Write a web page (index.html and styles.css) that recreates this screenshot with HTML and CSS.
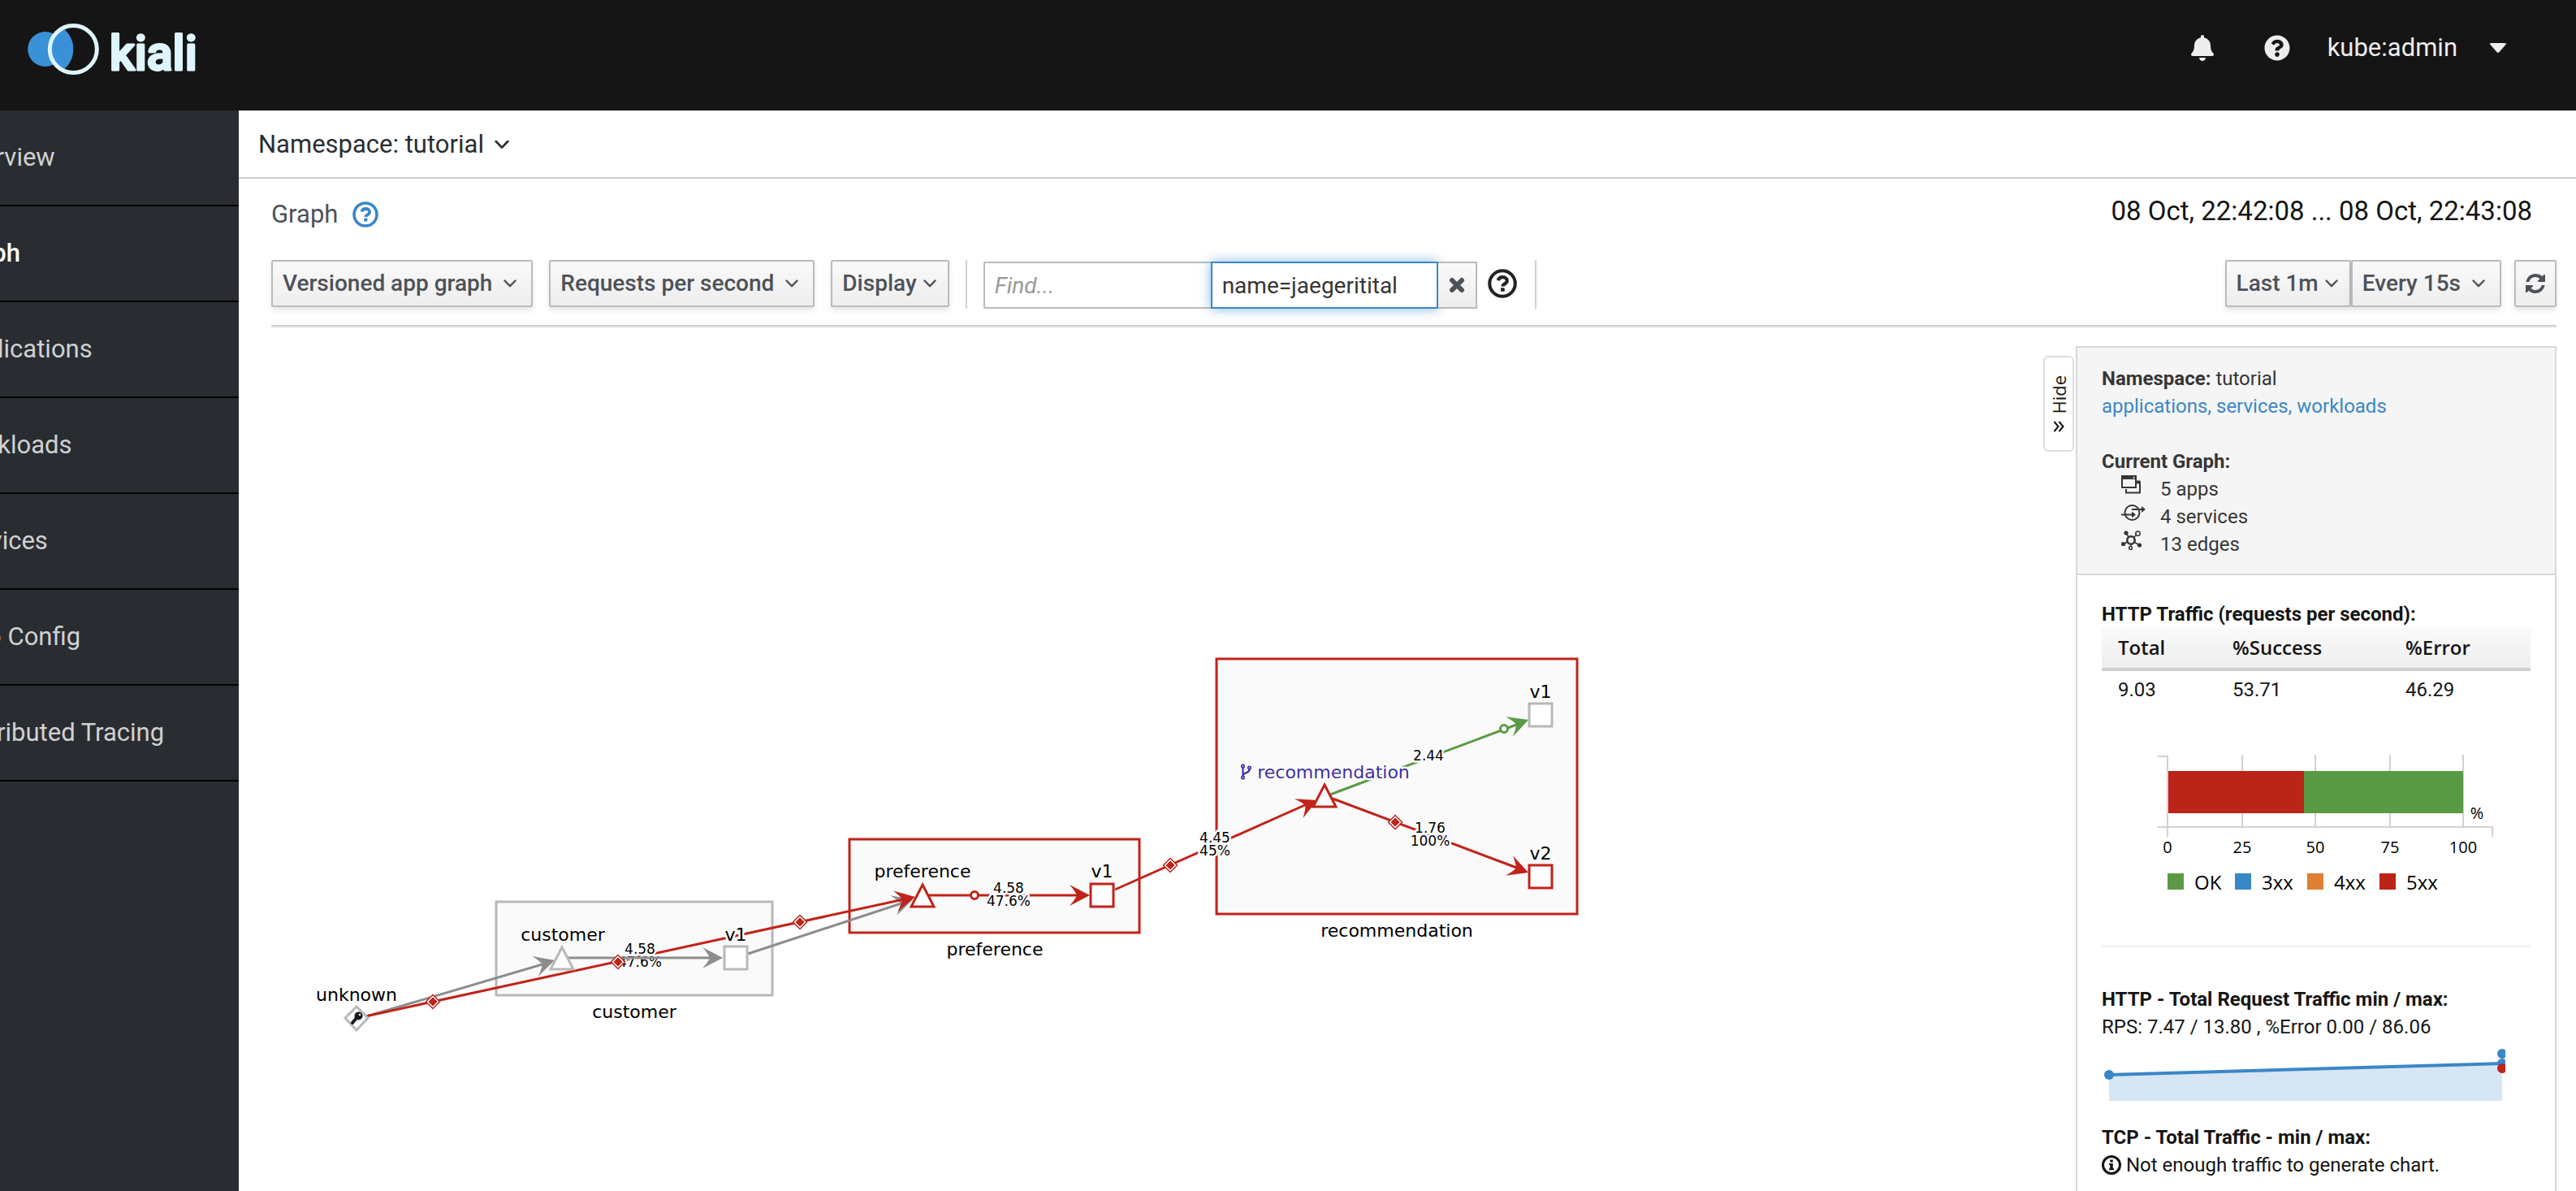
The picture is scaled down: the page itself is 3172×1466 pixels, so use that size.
FILE: index.html
```html
<!DOCTYPE html>
<html lang="en">
<head>
<meta charset="utf-8">
<meta name="viewport" content="width=device-width, initial-scale=1">
<title>Kiali - Graph</title>
<link rel="stylesheet" href="styles.css">
</head>
<body>
<svg class="defs" aria-hidden="true">
  <symbol id="chevron" viewBox="0 0 16 10"><path d="M1.5 1.5 8 8.200 14.500 1.500" fill="none" stroke="currentColor" stroke-width="2.400" stroke-linecap="round" stroke-linejoin="round"/></symbol>
  <symbol id="help-outline" viewBox="0 0 32 32">
    <circle cx="16" cy="16" r="14" fill="none" stroke="currentColor" stroke-width="3.600"/>
    <path d="M11.400 12.600C12 10.300 13.700 9 16.200 9c2.800 0 4.900 1.600 4.900 3.900 0 3.500-4.700 3.300-4.700 6.100" fill="none" stroke="currentColor" stroke-width="3.800"/>
    <rect x="14.200" y="20.600" width="4.200" height="4" rx="0.500" fill="currentColor"/>
  </symbol>
</svg>
<div class="app">
  <header class="masthead">
    <a class="brand" href="#" aria-label="Kiali home">
      <svg class="brand__logo" viewBox="34 26 220 66" aria-hidden="true">
        <clipPath id="ring-clip"><circle cx="90.300" cy="60.500" r="30"/></clipPath>
        <circle cx="55.700" cy="60.500" r="21.500" fill="#3b91d8"/>
        <circle cx="90.300" cy="60.500" r="30" fill="#151515"/>
        <circle cx="58" cy="60.500" r="32.400" fill="#3b91d8" clip-path="url(#ring-clip)"/>
        <circle cx="90.300" cy="60.500" r="29" fill="none" stroke="#def5fd" stroke-width="5"/>
        <text class="brand__name" x="135" y="86">kiali</text>
      </svg>
    </a>
    <div class="masthead__tools">
      <button class="icon-button" type="button" aria-label="Notifications">
        <svg width="28" height="32" viewBox="0 0 448 512"><path fill="currentColor" d="M224 512c35.320 0 63.970-28.650 63.970-64H160.030c0 35.350 28.650 64 63.970 64zm215.390-149.710c-19.320-20.760-55.470-51.990-55.470-154.290 0-77.700-54.480-139.900-127.940-155.160V32c0-17.670-14.320-32-31.980-32s-31.980 14.330-31.980 32v20.840C118.560 68.100 64.080 130.300 64.080 208c0 102.300-36.150 133.530-55.470 154.290-6 6.450-8.660 14.160-8.610 21.710.110 16.400 12.980 32 32.100 32h383.800c19.120 0 32-15.600 32.100-32 .050-7.550-2.610-15.270-8.610-21.710z"/></svg>
      </button>
      <button class="icon-button" type="button" aria-label="Help">
        <svg width="32" height="32" viewBox="0 0 512 512"><path fill="currentColor" d="M504 256c0 136.997-111.043 248-248 248S8 392.997 8 256C8 119.083 119.043 8 256 8s248 111.083 248 248zM262.655 90c-54.497 0-89.255 22.957-116.549 63.758-3.536 5.286-2.353 12.415 2.715 16.258l34.699 26.310c5.205 3.947 12.621 3.008 16.665-2.122 17.864-22.658 30.113-35.797 57.303-35.797 20.429 0 45.698 13.148 45.698 32.958 0 14.976-12.363 22.667-32.534 33.976C247.128 238.528 216 254.941 216 296v4c0 6.627 5.373 12 12 12h56c6.627 0 12-5.373 12-12v-1.333c0-28.462 83.186-29.647 83.186-106.667 0-58.002-60.165-102-116.531-102zM256 338c-25.365 0-46 20.635-46 46 0 25.364 20.635 46 46 46s46-20.636 46-46c0-25.365-20.635-46-46-46z"/></svg>
      </button>
      <button class="user-button" type="button">kube:admin
        <svg width="20" height="12" viewBox="0 0 20 12" aria-hidden="true"><path d="M1.500 0h17c1.200 0 1.800 1 1 2l-8.200 9.200c-.8.900-1.800.9-2.600 0L.5 2C-.3 1 .3 0 1.500 0z" fill="currentColor"/></svg>
      </button>
    </div>
  </header>

  <div class="body">
    <nav class="sidebar" aria-label="Main">
      <ul class="sidebar__list">
        <li><a href="#">Overview</a></li>
        <li><a class="is-current" href="#" aria-current="page">Graph</a></li>
        <li><a href="#">Applications</a></li>
        <li><a href="#">Workloads</a></li>
        <li><a href="#">Services</a></li>
        <li><a href="#">Istio Config</a></li>
        <li><a href="#">Distributed Tracing</a></li>
      </ul>
    </nav>

    <main class="main">
      <div class="namespace-bar">
        <button class="namespace-button" type="button">Namespace: tutorial <svg width="18" height="12"><use href="#chevron"/></svg></button>
      </div>

      <div class="page">
        <div class="title-row">
          <h1 class="title">Graph</h1>
          <button class="title__help" type="button" aria-label="Graph help"><svg width="32" height="32"><use href="#help-outline"/></svg></button>
          <time class="time-range">08 Oct, 22:42:08 ... 08 Oct, 22:43:08</time>
        </div>

        <div class="toolbar">
          <button class="btn" type="button">Versioned app graph <svg width="16" height="10"><use href="#chevron"/></svg></button>
          <button class="btn" type="button">Requests per second <svg width="16" height="10"><use href="#chevron"/></svg></button>
          <button class="btn btn--compact" type="button">Display <svg width="16" height="10"><use href="#chevron"/></svg></button>
          <form class="find">
            <input class="find__input" type="text" placeholder="Find..." aria-label="Find">
            <input class="find__input find__input--active" type="text" value="name=jaegeritital" aria-label="Hide">
            <button class="find__clear" type="button" aria-label="Clear">
              <svg width="20" height="20" viewBox="0 0 20 20"><path d="M4 4 16 16M16 4 4 16" stroke="currentColor" stroke-width="6" stroke-linecap="round"/></svg>
            </button>
            <button class="find__help" type="button" aria-label="Find help"><svg width="36" height="36"><use href="#help-outline"/></svg></button>
          </form>
          <div class="toolbar__right">
            <div class="btn-group">
              <button class="btn btn--compact" type="button">Last 1m <svg width="16" height="10"><use href="#chevron"/></svg></button>
              <button class="btn" type="button">Every 15s <svg width="16" height="10"><use href="#chevron"/></svg></button>
            </div>
            <button class="btn btn--icon" type="button" aria-label="Refresh">
              <svg width="24" height="24" viewBox="0 0 1536 1536"><path fill="currentColor" d="M1511 928q0 5-1 7-64 268-268 434.500t-478 166.500q-146 0-282.500-55t-243.500-157l-129 129q-19 19-45 19t-45-19-19-45v-448q0-26 19-45t45-19h448q26 0 45 19t19 45-19 45l-137 137q71 66 161 102t187 36q134 0 250-65t186-179q11-17 53-117 8-23 30-23h192q13 0 22.500 9.500t9.500 22.500zm25-800v448q0 26-19 45t-45 19h-448q-26 0-45-19t-19-45 19-45l138-138q-148-137-349-137-134 0-250 65t-186 179q-11 17-53 117-8 23-30 23h-199q-13 0-22.500-9.500t-9.500-22.500v-7q65-268 270-434.500t480-166.500q146 0 284 55.500t245 156.500l130-129q19-19 45-19t45 19 19 45z"/></svg>
            </button>
          </div>
        </div>

        <div class="content">
          <svg class="graph" role="img" aria-label="Service graph">
            <defs>
              <path id="arrow" d="M0 0-25-13Q-18-5-16 0-18 5-25 13z"/>
              <g id="tls"><path d="M0-8.500 8.500 0 0 8.500-8.500 0z" fill="#fff" stroke="#c0231a" stroke-width="1.500"/><path d="M0-5 5 0 0 5-5 0z" fill="#c0231a" stroke="#c0231a"/></g>
            </defs>
            <g transform="translate(-334 -402)">
              <g class="box"><rect x="611" y="1110" width="340" height="115"/></g>
              <g class="box box--error">
                <rect x="1046" y="1033" width="357" height="115"/>
                <rect x="1498" y="811" width="444" height="314"/>
              </g>

              <g class="edge edge--idle">
                <path d="M448 1252 678 1184M921 1174 1122 1108"/>
                <use href="#arrow" transform="translate(683 1182) rotate(-17)"/>
                <use href="#arrow" transform="translate(1124 1107) rotate(-18)"/>
              </g>
              <g class="edge edge--error">
                <path d="M450 1251 1122 1105M1143 1102H1336M1373 1095 1618 986M1641 983 1878 1072"/>
                <use href="#arrow" transform="translate(1127 1104) rotate(-12)"/>
                <use href="#arrow" transform="translate(1342 1102)"/>
                <use href="#arrow" transform="translate(1622 985) rotate(-24)"/>
                <use href="#arrow" transform="translate(1882 1074) rotate(20)"/>
                <circle cx="1200" cy="1102" r="4.500"/>
              </g>
              <g class="edge edge--ok">
                <path d="M1638 978 1878 888"/>
                <use href="#arrow" transform="translate(1882 886) rotate(-20)"/>
                <circle cx="1852" cy="897" r="4.500"/>
              </g>

              <g class="rate">
                <text x="788" y="1174">4.58</text><text x="788" y="1190">47.6%</text>
                <text x="1242" y="1099">4.58</text><text x="1242" y="1115">47.6%</text>
                <text x="1496" y="1037">4.45</text><text x="1496" y="1053">45%</text>
                <text x="1759" y="936">2.44</text>
                <text x="1761" y="1025">1.76</text><text x="1761" y="1041">100%</text>
              </g>

              <g class="edge edge--idle">
                <path d="M698 1179H884"/>
                <use href="#arrow" transform="translate(890 1179)"/>
              </g>
              <use href="#tls" x="533" y="1233"/>
              <use href="#tls" x="761" y="1184"/>
              <use href="#tls" x="985" y="1135"/>
              <use href="#tls" x="1441" y="1065"/>
              <use href="#tls" x="1718" y="1012"/>

              <g class="node">
                <path d="M439 1239 453 1253 439 1268 425 1253z"/>
                <path d="M692 1166 706 1193H678z"/>
                <rect x="892" y="1165" width="28" height="28"/>
                <rect x="1883" y="866" width="28" height="28"/>
              </g>
              <g class="node node--error">
                <path d="M1136 1089 1150 1116H1122z"/>
                <rect x="1343" y="1088" width="28" height="28"/>
                <path d="M1631 966 1645 993H1617z"/>
                <rect x="1883" y="1065" width="28" height="28"/>
              </g>
              <g transform="translate(439 1253)"><circle cx="2.500" cy="-2.500" r="5" fill="#151a20"/><path d="M0 0-5 6" stroke="#151a20" stroke-width="4" stroke-linecap="round"/><circle cx="4" cy="-4" r="1.300" fill="#fff"/></g>

              <g class="label">
                <text x="439" y="1232">unknown</text>
                <text x="693" y="1158">customer</text><text x="906" y="1158">v1</text>
                <text x="781" y="1253">customer</text>
                <text x="1136" y="1080">preference</text><text x="1357" y="1080">v1</text>
                <text x="1225" y="1176">preference</text>
                <text x="1897" y="859">v1</text><text x="1897" y="1058">v2</text>
                <text x="1720" y="1153">recommendation</text>
                <text class="label__link" x="1642" y="958">recommendation</text>
              </g>
              <g fill="none" stroke="#4030a0" stroke-width="1.700">
                <circle cx="1530.500" cy="943" r="1.700"/><circle cx="1530.500" cy="957" r="1.700"/><circle cx="1538.500" cy="945" r="1.700"/>
                <path d="M1530.500 945V955M1538.500 947C1538.500 952 1533 950 1530.500 954" stroke-width="2.200"/>
              </g>
            </g>
          </svg>

          <aside class="summary">
            <button class="hide-tab" type="button">
              <span class="hide-tab__text">Hide</span>
              <svg width="14" height="14" viewBox="0 0 14 14" aria-hidden="true"><path d="M1.500 1 6.500 7 1.500 13M7.500 1 12.500 7 7.500 13" fill="none" stroke="currentColor" stroke-width="2"/></svg>
            </button>
            <div class="panel">
              <section class="panel__head">
                <div><strong>Namespace:</strong> tutorial</div>
                <div><a href="#">applications</a><a href="#">, services</a><a href="#">, workloads</a></div>
                <div class="panel__group"><strong>Current Graph:</strong></div>
                <ul class="stats">
                  <li><svg width="26" height="24" viewBox="0 0 26 24"><path d="M19 8.500h4V21.500H6V17" fill="none" stroke="currentColor" stroke-width="2"/><path d="M19 6.500h4.500v4H19z" fill="currentColor"/><rect x="1" y="1" width="17" height="14" fill="#f5f5f5" stroke="currentColor" stroke-width="2"/><path d="M1 1h17v4H1z" fill="currentColor"/><circle cx="15.500" cy="3" r="1" fill="#f5f5f5"/></svg>5 apps</li>
                  <li><svg width="30" height="24" viewBox="0 0 30 24"><circle cx="13.500" cy="12" r="9" fill="none" stroke="currentColor" stroke-width="2"/><path d="M0 14.500H14M13 8H25" stroke="currentColor" stroke-width="2"/><path d="M13 10.500 18 14.500 13 18.500zM25 4 30 8 25 12z" fill="currentColor"/></svg>4 services</li>
                  <li><svg width="26" height="24" viewBox="0 0 26 24"><circle cx="12" cy="12" r="4.700" fill="none" stroke="currentColor" stroke-width="2.600"/><g fill="currentColor"><circle cx="6" cy="3" r="2.600"/><circle cx="2.600" cy="16.500" r="2.600"/><circle cx="22.500" cy="18" r="2.600"/></g><g fill="none" stroke="currentColor" stroke-width="1.500"><circle cx="20.500" cy="3.800" r="2.700"/><circle cx="11.500" cy="21.500" r="1.900"/><path d="M6.500 4 9 8M18.500 5.500 15.500 8.500M4 16 8 14M12 17v2.500M16 14.500 21 17"/></g></svg>13 edges</li>
                </ul>
              </section>
              <section class="panel__body">
                <strong>HTTP Traffic (requests per second):</strong>
                <table class="rates">
                  <thead><tr><th scope="col">Total</th><th scope="col">%Success</th><th scope="col">%Error</th></tr></thead>
                  <tbody><tr><td>9.03</td><td>53.71</td><td>46.29</td></tr></tbody>
                </table>
                <svg class="bar-chart" role="img" aria-label="Request status percentages">
                  <g transform="translate(-2588 -872)">
                    <path class="axis" d="M2657 931H2669V1030M2657 1018H3069V1030M2761 929V1017M2851 929V1017M2943 929V1017M3033 929V1017"/>
                    <rect x="2670" y="949" width="167" height="52" fill="#bb2419"/>
                    <rect x="2837" y="949" width="196" height="52" fill="#5a9a45"/>
                    <g class="tick">
                      <text x="3050" y="1008">%</text>
                      <text x="2669" y="1050">0</text><text x="2761" y="1050">25</text><text x="2851" y="1050">50</text><text x="2943" y="1050">75</text><text x="3033" y="1050">100</text>
                    </g>
                    <g class="legend">
                      <rect x="2669" y="1075" width="20" height="20" fill="#5a9a45"/><text x="2702" y="1095">OK</text>
                      <rect x="2752" y="1075" width="20" height="20" fill="#3a87c7"/><text x="2785" y="1095">3xx</text>
                      <rect x="2841" y="1075" width="20" height="20" fill="#de7f32"/><text x="2874" y="1095">4xx</text>
                      <rect x="2930" y="1075" width="20" height="20" fill="#bb2419"/><text x="2963" y="1095">5xx</text>
                    </g>
                  </g>
                </svg>
                <hr class="rule">
                <strong>HTTP - Total Request Traffic min / max:</strong>
                <div>RPS: 7.47 / 13.80 , %Error 0.00 / 86.06</div>
                <svg class="spark" role="img" aria-label="Request traffic">
                  <g transform="translate(-2588 -1281)">
                    <path d="M2597 1323 3081 1309V1355H2597z" fill="#d7e6f4"/>
                    <path d="M2597 1323 3081 1309" stroke="#3a87c7" stroke-width="4"/>
                    <g fill="#3a87c7"><circle cx="2597" cy="1323" r="6"/><circle cx="3081" cy="1297" r="6"/><circle cx="3081" cy="1309" r="6"/></g>
                    <circle cx="3081" cy="1315" r="6" fill="#c0231a"/>
                  </g>
                </svg>
                <strong>TCP - Total Traffic - min / max:</strong>
                <div class="note"><svg width="24" height="24" viewBox="0 0 24 24" aria-hidden="true"><circle cx="12" cy="12" r="10.500" fill="none" stroke="currentColor" stroke-width="3"/><path d="M10.200 5.500h3.600V8.500h-3.600zM9 10h4.800v6.200H15V18.200H9V16.200h1.200V12H9z" fill="currentColor"/></svg>Not enough traffic to generate chart.</div>
              </section>
            </div>
          </aside>
        </div>
      </div>
    </main>
  </div>
</div>
</body>
</html>
```
FILE: styles.css
```css
* { box-sizing: border-box; }
body { margin: 0; font-family: Roboto, "Liberation Sans", sans-serif; font-size: 24px; line-height: 34px; color: #151515; background: #fff; }
button, input { font: inherit; color: inherit; }
button { display: inline-flex; align-items: center; background: none; border: 0; padding: 0; margin: 0; white-space: nowrap; }
svg { flex: none; display: block; }
strong { display: block; font-weight: 700; }
ul { list-style: none; margin: 0; padding: 0; }
a { color: #3a87c7; text-decoration: none; }
.defs { position: absolute; width: 0; height: 0; }

.app { display: flex; flex-direction: column; height: 100vh; overflow: hidden; }

/* Masthead */
.masthead { flex: none; display: flex; align-items: center; justify-content: space-between; height: 136px; padding: 0 86px 18px 34px; background: #151515; color: #ededed; }
.brand__logo { width: 220px; height: 66px; overflow: visible; }
.brand__name { font-size: 59px; font-weight: 500; fill: #def5fd; stroke: #def5fd; stroke-width: 3; stroke-linejoin: round; }
.masthead__tools { display: flex; align-items: center; }
.icon-button { margin-right: 62px; }
.icon-button + .icon-button { margin-right: 46px; }
.user-button { gap: 40px; font-size: 31px; }

/* Sidebar */
.body { flex: 1; display: flex; min-height: 0; }
.sidebar { flex: none; width: 294px; background: #292d32; overflow: hidden; }
.sidebar__list { margin-left: -58px; }
.sidebar li { border-bottom: 2px solid #030303; }
.sidebar a { display: flex; align-items: center; height: 116px; font-size: 31px; color: #d1d1d1; white-space: nowrap; }
.sidebar a.is-current { color: #fff; font-weight: 500; }

/* Page */
.main { flex: 1; min-width: 0; display: flex; flex-direction: column; }
.namespace-bar { flex: none; display: flex; align-items: center; height: 84px; padding: 2px 0 0 24px; border-bottom: 2px solid #cccccc; }
.namespace-button { gap: 13px; font-size: 31px; color: #292e34; }
.page { flex: 1; min-height: 0; display: flex; flex-direction: column; padding: 0 24px 0 40px; }
.title-row { flex: none; display: flex; align-items: center; height: 100px; padding-bottom: 12px; }
.title { margin: 0; font-size: 31px; font-weight: 400; color: #4d5258; }
.title__help { margin-left: 18px; color: #3a87c7; }
.time-range { margin: 0 30px 8px auto; font-size: 33px; }

/* Toolbar */
.toolbar { flex: none; display: flex; align-items: flex-start; gap: 20px; height: 82px; border-bottom: 2px solid #cfcfcf; box-shadow: 0 2px 0 #f0f0f0; }
.btn { gap: 14px; height: 58px; padding: 0 18px 0 12px; border: 2px solid #bbb; border-radius: 2px; background: linear-gradient(#fafafa, #ededed); box-shadow: 0 4px 6px rgba(3, 3, 3, 0.1); color: #4d5258; font-size: 28px; font-weight: 500; }
.btn--compact { gap: 8px; padding-right: 14px; }
.btn--icon { padding: 0 12px; }
.btn-group { display: flex; }
.find { display: flex; align-items: flex-start; height: 60px; padding: 2px 22px 0 20px; border: solid #d1d1d1; border-width: 0 2px; }
.find__input { width: 280px; height: 58px; padding: 0 12px; border: 2px solid #bbb; border-right: 0; border-radius: 2px 0 0 2px; background: #fff; font-size: 28px; color: #363636; outline: 0; }
.find__input::placeholder { color: #999; font-style: italic; opacity: 1; }
.find__input--active { border: 2px solid #3a87c7; border-radius: 0; box-shadow: 0 0 14px rgba(57, 135, 199, 0.6); }
.find__clear { justify-content: center; width: 48px; height: 58px; border: 2px solid #bbb; border-left: 0; background: linear-gradient(#fafafa, #ededed); color: #4d5258; }
.find__help { height: 54px; margin-left: 13px; color: #222; }
.toolbar__right { display: flex; gap: 16px; margin-left: auto; }

/* Graph and summary */
.content { flex: 1; min-height: 0; display: flex; }
.graph { flex: 1; min-width: 0; height: 100%; font-family: "DejaVu Sans", sans-serif; }
.box { fill: #fafafa; stroke: #b8b8b8; stroke-width: 3; }
.box--error { stroke: #c0231a; }
.edge { stroke-width: 3; fill: none; }
.edge use { stroke: none; }
.edge circle { fill: #fff; }
.edge--idle { stroke: #8b8d8f; }
.edge--idle use { fill: #8b8d8f; }
.edge--error { stroke: #c0231a; }
.edge--error use { fill: #c0231a; }
.edge--ok { stroke: #5a9a45; }
.edge--ok use { fill: #5a9a45; }
.node { fill: #fff; stroke: #b8b8b8; stroke-width: 3; }
.node--error { stroke: #c0231a; }
.rate text, .label text { text-anchor: middle; paint-order: stroke; stroke: #fcfcfc; stroke-width: 5; stroke-linejoin: round; }
.rate { font-size: 17px; }
.label { font-size: 22px; }
.label .label__link { fill: #4030a0; }

.summary { flex: none; display: flex; align-items: flex-start; gap: 2px; padding-top: 24px; }
.hide-tab { flex-direction: column; justify-content: center; gap: 8px; width: 38px; height: 118px; margin-top: 12px; border: 2px solid #ddd; border-radius: 6px; }
.hide-tab__text { writing-mode: vertical-rl; transform: rotate(180deg); font-family: "Open Sans", sans-serif; font-size: 22px; line-height: 28px; }
.panel { width: 592px; border: 2px solid #d9d9d9; background: #fff; }
.panel__head { padding: 21px 30px 19px; border-bottom: 2px solid #d9d9d9; background: #f5f5f5; color: #363636; }
.panel__head strong { display: inline; }
.panel__group { margin-top: 34px; }
.stats { padding-left: 24px; }
.stats li { display: grid; grid-template-columns: 48px auto; }
.panel__body { padding: 31px 30px 60px; }
.rates { width: 100%; border-collapse: collapse; table-layout: fixed; }
.rates th { height: 51px; padding: 0 0 2px 20px; border-bottom: 4px solid #cfcfcf; font-family: "Open Sans", sans-serif; font-weight: 600; text-align: left; }
.rates thead { background: linear-gradient(#fafafa, #ededed); }
.rates th:nth-child(1) { width: 141px; }
.rates th:nth-child(2) { width: 213px; }
.rates td { height: 48px; padding: 0 0 0 20px; }
.bar-chart { width: 100%; height: 292px; font-family: "Open Sans", sans-serif; }
.axis { fill: none; stroke: #d1d1d1; stroke-width: 2; }
.tick { font-size: 20px; text-anchor: middle; }
.legend { font-size: 24px; }
.rule { margin: 0 0 47px; border: 0; border-top: 2px solid #f0f0f0; }
.spark { width: 497px; height: 102px; }
.note { display: flex; align-items: center; gap: 6px; }
```
